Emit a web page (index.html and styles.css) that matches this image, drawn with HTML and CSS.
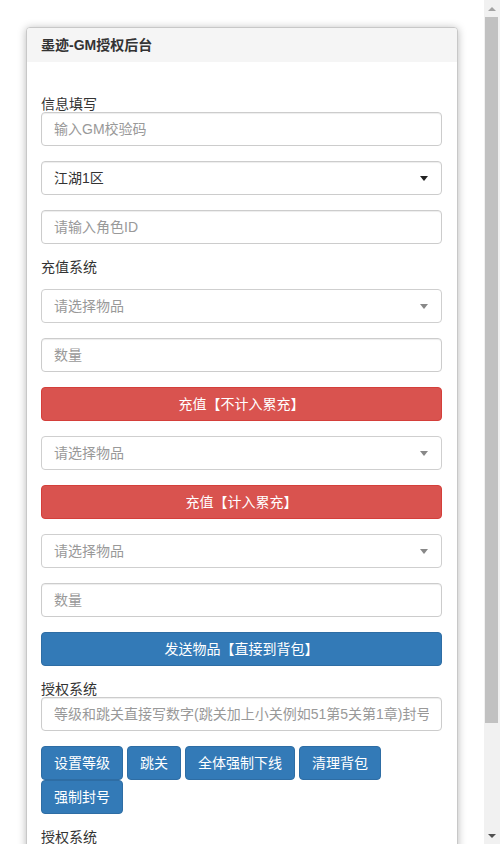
FILE: index.html
```html
<!DOCTYPE html>
<html lang="zh-CN">
<head>
<meta charset="utf-8">
<title>墨迹-GM授权后台</title>
<link rel="stylesheet" href="styles.css">
</head>
<body>
<div class="panel">
  <div class="panel-heading">墨迹-GM授权后台</div>
  <div class="panel-body">
    <label class="lbl lbl-first">信息填写</label>
    <input class="form-control" type="text" placeholder="输入GM校验码">
    <div class="form-control select native">
      <span class="sel-text">江湖1区</span>
      <span class="caret dark"></span>
    </div>
    <input class="form-control" type="text" placeholder="请输入角色ID">

    <label class="lbl lbl-sec">充值系统</label>
    <div class="form-control select s2">
      <span class="sel-text ph">请选择物品</span>
      <span class="caret"></span>
    </div>
    <input class="form-control" type="text" placeholder="数量">
    <button class="btn btn-danger btn-block">充值【不计入累充】</button>
    <div class="form-control select s2">
      <span class="sel-text ph">请选择物品</span>
      <span class="caret"></span>
    </div>
    <button class="btn btn-danger btn-block">充值【计入累充】</button>
    <div class="form-control select s2">
      <span class="sel-text ph">请选择物品</span>
      <span class="caret"></span>
    </div>
    <input class="form-control" type="text" placeholder="数量">
    <button class="btn btn-primary btn-block">发送物品【直接到背包】</button>

    <label class="lbl">授权系统</label>
    <input class="form-control" type="text" placeholder="等级和跳关直接写数字(跳关加上小关例如51第5关第1章)封号">
    <div class="btn-row">
      <button class="btn btn-primary">设置等级</button>
      <button class="btn btn-primary">跳关</button>
      <button class="btn btn-primary">全体强制下线</button>
      <button class="btn btn-primary">清理背包</button>
      <button class="btn btn-primary">强制封号</button>
    </div>

    <label class="lbl">授权系统</label>
    <input class="form-control" type="text" placeholder="请输入授权账号">
    <div class="btn-row last">
      <button class="btn btn-primary">添加授权</button>
      <button class="btn btn-primary">取消授权</button>
    </div>
  </div>
</div>

<div class="scrollbar" aria-hidden="true">
  <div class="sb-btn"><span class="sb-arrow up"></span></div>
  <div class="sb-track"><div class="sb-thumb"></div></div>
  <div class="sb-btn"><span class="sb-arrow down"></span></div>
</div>
</body>
</html>
```
FILE: styles.css
```css
* { box-sizing: border-box; }

html, body {
  margin: 0;
  padding: 0;
}

body {
  font-family: "Liberation Sans", "Noto Sans CJK SC", sans-serif;
  font-size: 14px;
  line-height: 20px;
  color: #333;
  background: #fff;
}

/* fake classic scrollbar drawn over the right edge */
.scrollbar {
  position: fixed;
  top: 0;
  right: 0;
  width: 16px;
  height: 100vh;
  background: #f1f1f1;
  display: flex;
  flex-direction: column;
}

.sb-btn {
  height: 17px;
  flex: none;
  display: flex;
  align-items: center;
  justify-content: center;
}

.sb-arrow {
  width: 0;
  height: 0;
  border-left: 4px solid transparent;
  border-right: 4px solid transparent;
}

.sb-arrow.up {
  border-bottom: 4px solid #a3a3a3;
}

.sb-arrow.down {
  border-top: 4px solid #505050;
}

.sb-track {
  flex: 1;
  padding: 0 2px 0 1px;
}

.sb-thumb {
  height: 706px;
  background: #c1c1c1;
}

.panel {
  width: 432px;
  margin: 27px 0 20px 26px;
  border: 1px solid #c8c8c8;
  border-radius: 4px;
  background: #fff;
  box-shadow: 0 1px 8px rgba(0, 0, 0, 0.28);
  overflow: hidden;
}

.panel-heading {
  background: #f5f5f5;
  padding: 10px 14px 9px;
  height: 34px;
  line-height: 14px;
  font-weight: bold;
  color: #333;
  font-size: 14px;
}

.panel-body {
  padding: 15px 15px 15px 14px;
  display: flex;
  flex-direction: column;
}

.lbl {
  display: block;
  line-height: 16px;
  height: 16px;
  color: #333;
}

.lbl-first {
  margin-top: 19px;
}

.lbl-sec {
  margin-bottom: 14px;
}

.form-control {
  display: block;
  width: 100%;
  height: 34px;
  padding: 6px 12px;
  margin: 0 0 15px 0;
  font-family: inherit;
  font-size: 14px;
  line-height: 20px;
  color: #555;
  background: #fff;
  border: 1px solid #ccc;
  border-radius: 4px;
  box-shadow: inset 0 1px 1px rgba(0, 0, 0, 0.075);
  outline: none;
}

.form-control::placeholder {
  color: #999;
}

.select {
  display: flex;
  align-items: center;
  justify-content: space-between;
  padding-right: 13px;
}

.sel-text {
  color: #333;
}

.sel-text.ph {
  color: #999;
}

.s2 {
  box-shadow: none;
  border-color: #cfcfcf;
}

.caret {
  width: 0;
  height: 0;
  border-left: 4px solid transparent;
  border-right: 4px solid transparent;
  border-top: 5px solid #888;
}

.caret.dark {
  border-top: 5px solid #222;
}

.btn {
  display: inline-block;
  height: 34px;
  padding: 6px 12px;
  font-family: inherit;
  font-size: 14px;
  line-height: 20px;
  color: #fff;
  border: 1px solid transparent;
  border-radius: 4px;
  text-align: center;
  white-space: nowrap;
  cursor: pointer;
}

.btn-block {
  display: block;
  width: 100%;
  margin-bottom: 15px;
}

.btn-danger {
  background: #d9534f;
  border-color: #d43f3a;
}

.btn-primary {
  background: #337ab7;
  border-color: #2e6da4;
}

.btn-row {
  display: flex;
  flex-wrap: wrap;
  column-gap: 4px;
  row-gap: 0;
  margin-bottom: 15px;
}

.btn-row.last {
  margin-bottom: 0;
}
```
